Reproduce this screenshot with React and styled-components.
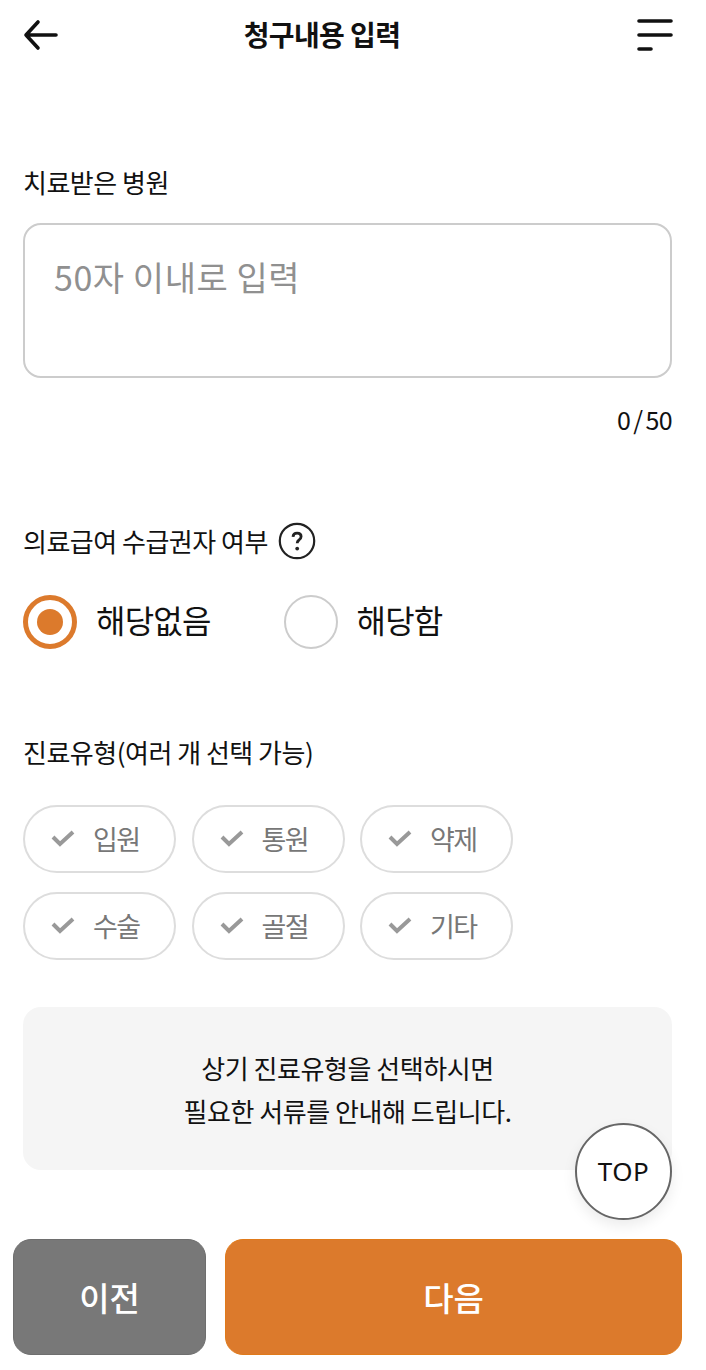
import styled, { createGlobalStyle } from 'styled-components';

const FONT = `"Noto Sans CJK KR", "Noto Sans", sans-serif`;

const GlobalStyle = createGlobalStyle`
  html, body {
    margin: 0;
    padding: 0;
    background: #fff;
    font-family: ${FONT};
    color: #111;
  }
  * { box-sizing: border-box; }
`;

const Page = styled.div`
  width: 706px;
  height: 1370px;
  overflow: hidden;
  position: relative;
`;

const Header = styled.header`
  height: 70px;
  padding: 0 33px 0 23px;
  display: flex;
  align-items: center;
  justify-content: space-between;
`;

const Title = styled.h1`
  margin: -2px 52px 0 0;
  font-size: 28px;
  font-weight: 700;
  letter-spacing: -0.6px;
  line-height: 40px;
`;

const Content = styled.main`
  padding: 91px 34px 0 23px;
`;

const Label = styled.div`
  display: flex;
  align-items: center;
  gap: 10px;
  height: 42px;
  font-size: 26px;
  letter-spacing: -0.5px;
  line-height: 42px;
`;

const TextBox = styled.div`
  margin-top: 20px;
  height: 155px;
  padding: 28px 29px;
  border: 2px solid #ccc;
  border-radius: 18px;
  font-size: 34px;
  line-height: 48px;
  letter-spacing: 0.55px;
  color: #909090;
`;

const Counter = styled.div`
  margin-top: 21px;
  text-align: right;
  font-size: 25px;
  line-height: 40px;
  letter-spacing: -0.6px;
  word-spacing: -2px;
`;

const RadioSection = styled.section`
  margin-top: 81px;
`;

const RadioRow = styled.div`
  margin-top: 33px;
  display: flex;
  gap: 73px;
`;

const RadioOption = styled.div`
  display: flex;
  align-items: center;
  gap: 19px;
  font-size: 32px;
  letter-spacing: -0.8px;
`;

const RadioText = styled.span`
  padding-bottom: 6px;
`;

const RadioMark = styled.span`
  width: 54px;
  height: 54px;
  border-radius: 50%;
  border: ${p => (p.$on ? '5px solid #dc7a2c' : '2px solid #ccc')};
  display: flex;
  align-items: center;
  justify-content: center;
  &::after {
    content: '';
    display: ${p => (p.$on ? 'block' : 'none')};
    width: 26px;
    height: 26px;
    border-radius: 50%;
    background: #dc7a2c;
  }
`;

const TypeSection = styled.section`
  margin-top: 82px;
`;

const ChipGrid = styled.div`
  margin-top: 32px;
  display: grid;
  grid-template-columns: repeat(3, 153px);
  column-gap: 15.5px;
  row-gap: 19px;
`;

const Chip = styled.div`
  height: 68px;
  border: 2px solid #ddd;
  border-radius: 34px;
  padding: 0 0 2px 26px;
  display: flex;
  align-items: center;
  gap: 18px;
  font-size: 27px;
  letter-spacing: -1.6px;
  color: #777;
`;

const InfoBox = styled.div`
  margin-top: 47px;
  height: 163px;
  background: #f5f5f5;
  border-radius: 18px;
  display: flex;
  flex-direction: column;
  align-items: center;
  justify-content: center;
  font-size: 26px;
  line-height: 43px;
  letter-spacing: -0.45px;
`;

const TopButton = styled.div`
  position: absolute;
  left: 575px;
  top: 1123px;
  width: 97px;
  height: 97px;
  border-radius: 50%;
  border: 2px solid #666;
  background: #fff;
  box-shadow: 0 6px 14px rgba(0, 0, 0, 0.08);
  display: flex;
  align-items: center;
  justify-content: center;
  padding-bottom: 2px;
  font-family: "Noto Sans", sans-serif;
  font-size: 26px;
  letter-spacing: 0.5px;
`;

const Footer = styled.footer`
  margin-top: 69px;
  padding: 0 24px 0 13px;
  display: grid;
  grid-template-columns: 193px 1fr;
  column-gap: 19px;
`;

const ActionButton = styled.div`
  height: 116px;
  border-radius: 18px;
  display: flex;
  align-items: center;
  justify-content: center;
  font-size: 33px;
  font-weight: 500;
  color: #fff;
  background: ${p => (p.$primary ? '#dc7a2c' : '#787878')};
  border: 1px solid ${p => (p.$primary ? '#e07a1a' : '#6e6e6e')};
`;

const BackIcon = () => (
  <svg width="36" height="32" viewBox="0 0 36 32" fill="none" stroke="#111" strokeWidth="3.6" strokeLinecap="round" strokeLinejoin="round">
    <path d="M33 16H3M15 3L3 16l12 13" />
  </svg>
);

const MenuIcon = () => (
  <svg width="36" height="34" viewBox="0 0 36 34" fill="none" stroke="#111" strokeWidth="3.6" strokeLinecap="round">
    <path d="M2 3h32M2 17h32M2 31h12" />
  </svg>
);

const HelpIcon = () => (
  <svg width="38" height="38" viewBox="0 0 38 38">
    <circle cx="19" cy="19" r="17.2" fill="none" stroke="#222" strokeWidth="2.2" />
    <path d="M15 14.8c.2-2.3 1.8-3.6 4.1-3.6 2.4 0 4 1.3 4 3.4 0 1.6-.9 2.5-2.1 3.4-1.3.9-1.8 1.7-1.8 3.2" fill="none" stroke="#222" strokeWidth="2.8" />
    <circle cx="19.2" cy="26.6" r="1.9" fill="#222" />
  </svg>
);

const CheckIcon = () => (
  <svg width="24" height="18" viewBox="0 0 24 18" fill="none" stroke="#999" strokeWidth="4" strokeLinejoin="miter">
    <path d="M2 8l7 7L22 3" />
  </svg>
);

const chips = ['입원', '통원', '약제', '수술', '골절', '기타'];

export default function App() {
  return (
    <Page>
      <GlobalStyle />
      <Header>
        <BackIcon />
        <Title>청구내용 입력</Title>
        <MenuIcon />
      </Header>
      <Content>
        <Label>치료받은 병원</Label>
        <TextBox>50자 이내로 입력</TextBox>
        <Counter>0 / 50</Counter>

        <RadioSection>
          <Label>의료급여 수급권자 여부 <HelpIcon /></Label>
          <RadioRow>
            <RadioOption><RadioMark $on /><RadioText>해당없음</RadioText></RadioOption>
            <RadioOption><RadioMark /><RadioText>해당함</RadioText></RadioOption>
          </RadioRow>
        </RadioSection>

        <TypeSection>
          <Label>진료유형(여러 개 선택 가능)</Label>
          <ChipGrid>
            {chips.map(c => (
              <Chip key={c}><CheckIcon />{c}</Chip>
            ))}
          </ChipGrid>
        </TypeSection>

        <InfoBox>
          <div>상기 진료유형을 선택하시면</div>
          <div>필요한 서류를 안내해 드립니다.</div>
        </InfoBox>
      </Content>
      <TopButton>TOP</TopButton>
      <Footer>
        <ActionButton>이전</ActionButton>
        <ActionButton $primary>다음</ActionButton>
      </Footer>
    </Page>
  );
}
